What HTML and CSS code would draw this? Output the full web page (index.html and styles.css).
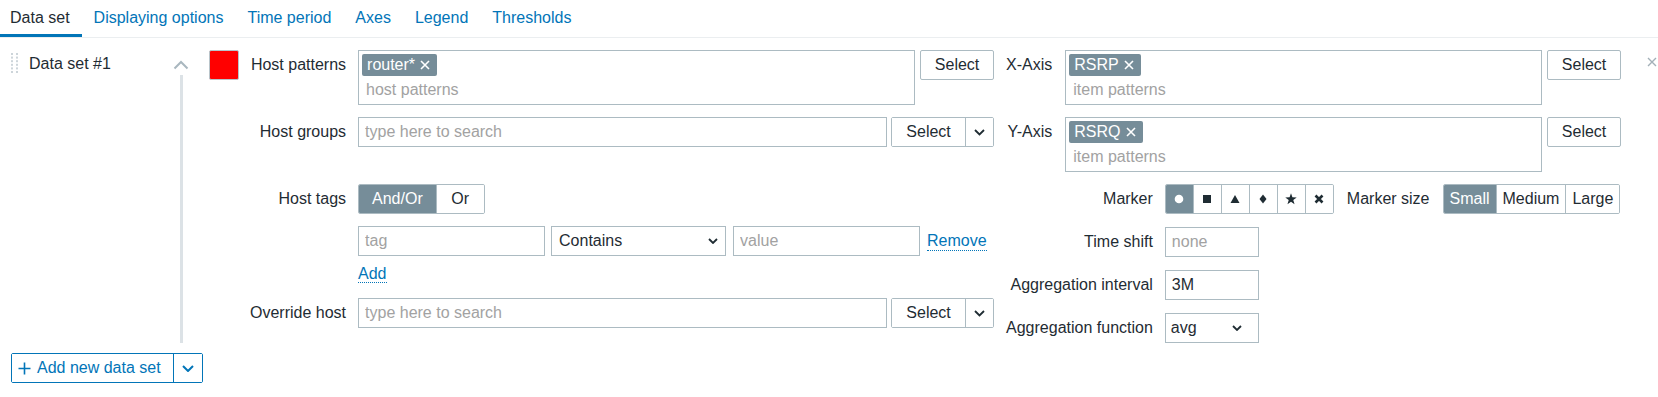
FILE: index.html
```html
<!DOCTYPE html>
<html lang="en">
<head>
<meta charset="utf-8">
<title>Data set</title>
<link rel="stylesheet" href="styles.css">
</head>
<body>
<nav class="tabs">
  <a class="tab active">Data set</a>
  <a class="tab">Displaying options</a>
  <a class="tab">Time period</a>
  <a class="tab">Axes</a>
  <a class="tab">Legend</a>
  <a class="tab">Thresholds</a>
</nav>
<main class="content">
  <div class="ds-row">
    <div class="ds-side">
      <svg class="handle" width="7" height="20" viewBox="0 0 7 20">
        <g fill="#cdd5da">
          <rect x="0" y="0" width="2" height="2"/><rect x="5" y="0" width="2" height="2"/>
          <rect x="0" y="3.6" width="2" height="2"/><rect x="5" y="3.6" width="2" height="2"/>
          <rect x="0" y="7.2" width="2" height="2"/><rect x="5" y="7.2" width="2" height="2"/>
          <rect x="0" y="10.8" width="2" height="2"/><rect x="5" y="10.8" width="2" height="2"/>
          <rect x="0" y="14.4" width="2" height="2"/><rect x="5" y="14.4" width="2" height="2"/>
          <rect x="0" y="18" width="2" height="2"/><rect x="5" y="18" width="2" height="2"/>
        </g>
      </svg>
      <span class="ds-title">Data set #1</span>
      <div class="ds-toggle">
        <svg class="chev-up" width="16" height="10" viewBox="0 0 16 10"><polyline points="1.5,8.5 8,2 14.5,8.5"/></svg>
        <div class="ds-line"></div>
      </div>
    </div>

    <div class="swatch"></div>

    <div class="form-grid form-left">
      <label class="label">Host patterns</label>
      <div class="field-line">
        <div class="multiselect">
          <div class="ms-tags">
            <span class="ms-tag">router*<svg class="ms-x" width="10" height="10" viewBox="0 0 10 10"><path d="M1 1L9 9M9 1L1 9"/></svg></span>
          </div>
          <input class="ms-input" placeholder="host patterns">
        </div>
        <button class="btn btn-select">Select</button>
      </div>

      <label class="label">Host groups</label>
      <div class="field-line gap4">
        <input class="text-input grow" placeholder="type here to search">
        <div class="split">
          <button class="split-main">Select</button>
          <button class="split-drop"><svg class="chev-down" width="11" height="7" viewBox="0 0 11 7"><polyline points="1,1 5.5,5.5 10,1"/></svg></button>
        </div>
      </div>

      <label class="label row-tags">Host tags</label>
      <div class="row-tags">
        <div class="seg seg-wide"><span class="on">And/Or</span><span>Or</span></div>
      </div>

      <span class="label"></span>
      <div class="tag-table">
        <div class="tag-row">
          <input class="text-input w-tag" placeholder="tag">
          <div class="select w-op"><span>Contains</span><svg class="chev-down" width="10" height="6" viewBox="0 0 10 6"><polyline points="1,1 5,5 9,1"/></svg></div>
          <input class="text-input w-tag" placeholder="value">
          <a class="link">Remove</a>
        </div>
        <div class="tag-add"><a class="link">Add</a></div>
      </div>

      <label class="label">Override host</label>
      <div class="field-line gap4">
        <input class="text-input grow" placeholder="type here to search">
        <div class="split">
          <button class="split-main">Select</button>
          <button class="split-drop"><svg class="chev-down" width="11" height="7" viewBox="0 0 11 7"><polyline points="1,1 5.5,5.5 10,1"/></svg></button>
        </div>
      </div>
    </div>

    <div class="form-right">
      <div class="form-grid axis-grid">
        <label class="label">X-Axis</label>
        <div class="field-line">
          <div class="multiselect">
            <div class="ms-tags">
              <span class="ms-tag">RSRP<svg class="ms-x" width="10" height="10" viewBox="0 0 10 10"><path d="M1 1L9 9M9 1L1 9"/></svg></span>
            </div>
            <input class="ms-input" placeholder="item patterns">
          </div>
          <button class="btn btn-select">Select</button>
        </div>

        <label class="label">Y-Axis</label>
        <div class="field-line">
          <div class="multiselect">
            <div class="ms-tags">
              <span class="ms-tag">RSRQ<svg class="ms-x" width="10" height="10" viewBox="0 0 10 10"><path d="M1 1L9 9M9 1L1 9"/></svg></span>
            </div>
            <input class="ms-input" placeholder="item patterns">
          </div>
          <button class="btn btn-select">Select</button>
        </div>
      </div>

      <div class="form-grid opt-grid">
        <label class="label">Marker</label>
        <div class="marker-line">
          <div class="seg seg-icons">
            <span class="on"><svg width="10" height="10" viewBox="0 0 10 10"><circle cx="5" cy="5" r="4.3" fill="#fff"/></svg></span>
            <span><svg width="10" height="10" viewBox="0 0 10 10"><rect x="1" y="1" width="8" height="8"/></svg></span>
            <span><svg width="10" height="10" viewBox="0 0 10 10"><polygon points="5,1 9.5,9 0.5,9"/></svg></span>
            <span><svg width="10" height="10" viewBox="0 0 10 10"><polygon points="5,0.5 8.5,5 5,9.5 1.5,5"/></svg></span>
            <span><svg width="12" height="12" viewBox="0 0 12 12"><polygon points="6,0.3 7.41,4.36 11.71,4.45 8.28,7.04 9.53,11.15 6,8.7 2.47,11.15 3.72,7.04 0.29,4.45 4.59,4.36"/></svg></span>
            <span><svg width="10" height="10" viewBox="0 0 10 10"><path class="xmark" d="M1.5 1.5L8.5 8.5M8.5 1.5L1.5 8.5"/></svg></span>
          </div>
          <span class="inline-label">Marker size</span>
          <div class="seg"><span class="on">Small</span><span>Medium</span><span>Large</span></div>
        </div>

        <label class="label">Time shift</label>
        <div><input class="text-input w-short" placeholder="none"></div>

        <label class="label">Aggregation interval</label>
        <div><input class="text-input w-short" value="3M"></div>

        <label class="label">Aggregation function</label>
        <div><div class="select w-short sel-avg"><span>avg</span><svg class="chev-down" width="10" height="6" viewBox="0 0 10 6"><polyline points="1,1 5,5 9,1"/></svg></div></div>
      </div>
    </div>

    <button class="ds-remove" aria-label="Remove"><svg width="10" height="10" viewBox="0 0 10 10"><path d="M1 1L9 9M9 1L1 9"/></svg></button>
  </div>

  <div class="add-row">
    <div class="add-btn">
      <button class="add-main"><svg width="13" height="13" viewBox="0 0 13 13"><path d="M6.5 0.5V12.5M0.5 6.5H12.5"/></svg>Add new data set</button>
      <button class="add-drop"><svg width="12" height="7" viewBox="0 0 12 7"><polyline points="1,1 6,6 11,1"/></svg></button>
    </div>
  </div>
</main>
</body>
</html>
```

FILE: styles.css
```css
body {
  margin: 0;
  background: #fff;
  color: #1f2c33;
  font-family: "Liberation Sans", Arial, Helvetica, sans-serif;
  font-size: 16px;
}

button, input {
  font: inherit;
  color: inherit;
}

/* Tabs */
.tabs {
  display: flex;
  border-bottom: 1px solid #ebeef0;
}
.tab {
  padding: 2px 12px 0;
  line-height: 32px;
  border-bottom: 3px solid transparent;
  color: #0275b8;
  text-decoration: none;
  white-space: nowrap;
}
.tab:first-child { margin-left: -2px; }
.tab.active {
  color: #1f2c33;
  border-bottom-color: #0275b8;
}

/* Content */
.content { padding-top: 12px; }

.ds-row {
  display: flex;
  align-items: flex-start;
  padding-bottom: 4px;
}

.ds-side {
  align-self: stretch;
  width: 189px;
  box-sizing: border-box;
  padding-left: 11px;
  display: flex;
  align-items: flex-start;
}
.handle { display: block; margin-top: 3px; flex: none; }
.ds-title {
  flex: 1;
  margin-left: 11px;
  line-height: 28px;
  white-space: nowrap;
}
.ds-toggle {
  align-self: stretch;
  width: 16px;
  display: flex;
  flex-direction: column;
  align-items: center;
}
.chev-up {
  display: block;
  margin-top: 10px;
  fill: none;
  stroke: #a9b7bf;
  stroke-width: 2;
}
.ds-line {
  flex: 1;
  width: 3px;
  margin-top: 5px;
  background: #dce2e6;
}

.swatch {
  margin-left: 20px;
  width: 30px;
  height: 30px;
  box-sizing: border-box;
  border: 1px solid #b8c4ca;
  border-radius: 2px;
  background: #ff0000;
  flex: none;
}

/* Form grids */
.form-grid {
  display: grid;
  grid-template-columns: auto 1fr;
  align-items: start;
}
.form-left {
  margin-left: 11px;
  grid-template-columns: auto 636px;
  column-gap: 12px;
  row-gap: 12px;
}
.label {
  text-align: right;
  line-height: 29px;
  white-space: nowrap;
}
.row-tags { margin-top: 25px; }

.field-line {
  display: flex;
  gap: 5px;
}
.field-line.gap4 { gap: 4px; }
.grow { flex: 1; min-width: 0; }

/* Multiselect */
.multiselect {
  flex: 1;
  min-width: 0;
  height: 55px;
  box-sizing: border-box;
  border: 1px solid #acbbc2;
  padding: 3px 3px 0;
  display: flex;
  flex-direction: column;
}
.ms-tags { display: flex; }
.ms-tag {
  display: flex;
  align-items: center;
  gap: 5px;
  height: 22px;
  padding: 0 7px 0 5px;
  border-radius: 2px;
  background: #768d99;
  color: #fff;
  white-space: nowrap;
}
.ms-x {
  display: block;
  fill: none;
  stroke: #fff;
  stroke-width: 1.6;
}
.ms-input {
  height: 28px;
  border: 0;
  outline: 0;
  padding: 0 4px;
  background: transparent;
}

/* Inputs, buttons */
.text-input {
  height: 30px;
  box-sizing: border-box;
  border: 1px solid #acbbc2;
  border-radius: 0;
  padding: 0 6px;
  outline: 0;
  background: #fff;
}
::placeholder { color: #a2a2a2; opacity: 1; }

.btn {
  height: 30px;
  box-sizing: border-box;
  border: 1px solid #acbbc2;
  border-radius: 2px;
  background: #fff;
  padding: 0;
}
.btn-select { width: 74px; flex: none; }

.split {
  display: flex;
  width: 103px;
  height: 30px;
  box-sizing: border-box;
  border: 1px solid #acbbc2;
  border-radius: 2px;
  flex: none;
}
.split-main {
  width: 73px;
  border: 0;
  padding: 0;
  background: #fff;
}
.split-drop {
  flex: 1;
  border: 0;
  border-left: 1px solid #acbbc2;
  padding: 0;
  background: #fff;
  display: flex;
  align-items: center;
  justify-content: center;
}
.chev-down {
  display: block;
  fill: none;
  stroke: #1f2c33;
  stroke-width: 1.8;
}

/* Segmented radios */
.seg {
  display: inline-flex;
  height: 30px;
  box-sizing: border-box;
  border: 1px solid #acbbc2;
  border-radius: 2px;
  overflow: hidden;
}
.seg span {
  display: flex;
  align-items: center;
  justify-content: center;
  padding: 0 6px;
  border-left: 1px solid #acbbc2;
  white-space: nowrap;
  background: #fff;
}
.seg span:first-child { border-left: 0; }
.seg span.on {
  background: #768d99;
  color: #fff;
}
.seg-wide span {
  min-width: 48px;
  padding: 0 13px;
  box-sizing: border-box;
}
.seg-icons span {
  width: 27px;
  padding: 0;
}
.seg-icons svg {
  display: block;
  fill: #1f2c33;
}
.seg-icons .xmark {
  fill: none;
  stroke: #1f2c33;
  stroke-width: 2.6;
}

/* Tags table */
.tag-row {
  display: flex;
  align-items: center;
}
.w-tag { width: 187px; }
.tag-row .select { margin: 0 7px 0 6px; }
.tag-row .link { margin-left: 7px; }
.select {
  display: flex;
  align-items: center;
  justify-content: space-between;
  height: 30px;
  box-sizing: border-box;
  border: 1px solid #acbbc2;
  padding: 0 7px 0 7px;
  background: #fff;
}
.w-op { width: 175px; }
.tag-add {
  margin-top: 6px;
  line-height: 24px;
}
.link {
  color: #0275b8;
  border-bottom: 1px dotted #0275b8;
  text-decoration: none;
  white-space: nowrap;
}

/* Right column */
.form-right {
  margin-left: 12px;
  width: 615px;
  flex: none;
}
.axis-grid {
  column-gap: 13px;
  row-gap: 12px;
}
.opt-grid {
  margin-top: 12px;
  column-gap: 12px;
  row-gap: 13px;
}
.marker-line {
  display: flex;
  align-items: center;
}
.inline-label {
  margin: 0 13px;
  white-space: nowrap;
}
.w-short { width: 94px; }
.sel-avg { padding: 0 16px 0 5px; }

.ds-remove {
  margin-left: auto;
  margin-right: 1px;
  margin-top: 7px;
  width: 10px;
  height: 10px;
  padding: 0;
  border: 0;
  background: none;
}
.ds-remove svg {
  display: block;
  fill: none;
  stroke: #a3b0b8;
  stroke-width: 1.4;
}

/* Add new data set */
.add-row {
  padding-left: 11px;
  margin-top: 6px;
  display: flex;
}
.add-btn {
  display: flex;
  height: 30px;
  box-sizing: border-box;
  border: 1px solid #0275b8;
  border-radius: 2px;
  color: #0275b8;
}
.add-main {
  display: flex;
  align-items: center;
  gap: 6px;
  padding: 0 12px 0 6px;
  border: 0;
  background: #fff;
  color: #0275b8;
  white-space: nowrap;
}
.add-main svg {
  display: block;
  fill: none;
  stroke: #0275b8;
  stroke-width: 1.6;
}
.add-drop {
  width: 29px;
  border: 0;
  border-left: 1px solid #0275b8;
  padding: 0;
  background: #fff;
  display: flex;
  align-items: center;
  justify-content: center;
}
.add-drop svg {
  display: block;
  fill: none;
  stroke: #0275b8;
  stroke-width: 2;
}
```
